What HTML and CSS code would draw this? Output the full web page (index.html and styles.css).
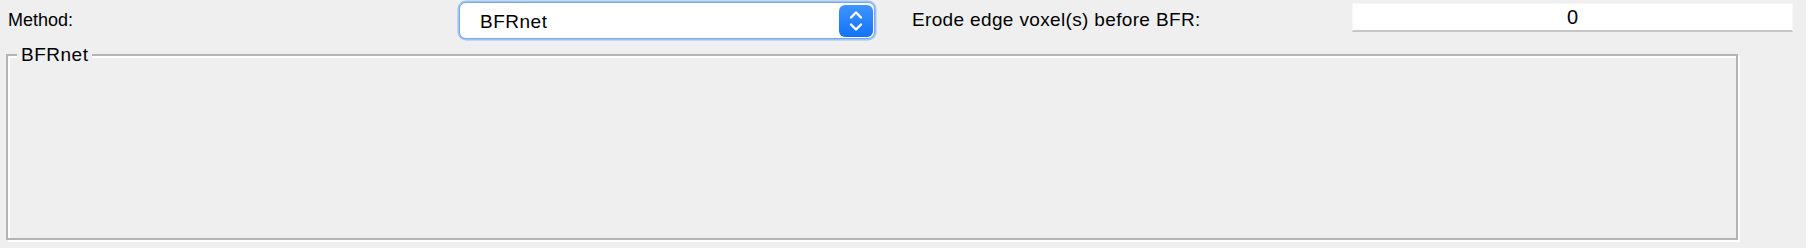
FILE: index.html
```html
<!DOCTYPE html>
<html>
<head>
<meta charset="utf-8">
<link rel="stylesheet" href="styles.css">
</head>
<body>
<div class="page">
  <div class="toprow">
    <div class="label label-method">Method:</div>
    <div class="combo">
      <span class="combo-text">BFRnet</span>
      <span class="combo-btn">
        <svg width="14" height="22" viewBox="0 0 14 22">
          <path d="M2 7.5 L7 2.5 L12 7.5" fill="none" stroke="#fff" stroke-width="2.4" stroke-linecap="round" stroke-linejoin="round"/>
          <path d="M2 14.5 L7 19.5 L12 14.5" fill="none" stroke="#fff" stroke-width="2.4" stroke-linecap="round" stroke-linejoin="round"/>
        </svg>
      </span>
    </div>
    <div class="label label-erode">Erode edge voxel(s) before BFR:</div>
    <div class="spin">0</div>
  </div>
  <div class="group">
    <div class="group-title">BFRnet</div>
  </div>
</div>
</body>
</html>
```

FILE: styles.css
```css
html, body {
  margin: 0;
  padding: 0;
  background: #efefef;
}
body {
  width: 1806px;
  height: 248px;
  overflow: hidden;
  font-family: "Liberation Sans", Arial, Helvetica, sans-serif;
  color: #000;
}
.page {
  display: flex;
  flex-direction: column;
}
.toprow {
  display: flex;
  align-items: flex-start;
  height: 54px;
  padding-left: 8px;
}
.label {
  font-size: 19px;
  line-height: 20px;
  padding-top: 10px;
}
.label-method {
  width: 451px;
  font-size: 18px;
}
.label-erode {
  width: 440px;
  margin-left: 37px;
  letter-spacing: 0.35px;
}
.combo {
  box-sizing: border-box;
  margin-top: 2px;
  width: 416px;
  height: 37px;
  background: #fff;
  border: 1px solid #74a9ef;
  border-radius: 7px;
  box-shadow: 0 0 0 1.5px rgba(126, 177, 243, 0.7);
  display: flex;
  align-items: center;
  justify-content: space-between;
  padding-left: 20px;
  padding-right: 1px;
}
.combo-text {
  font-size: 19px;
  letter-spacing: 0.5px;
  padding-top: 3px;
}
.combo-btn {
  width: 34px;
  height: 32px;
  border-radius: 6px;
  background: linear-gradient(#3f94ff, #1273f6);
  display: flex;
  align-items: center;
  justify-content: center;
}
.combo-btn svg {
  display: block;
}
.spin {
  box-sizing: border-box;
  margin-top: 3px;
  width: 441px;
  height: 29px;
  background: #fff;
  border: 1px solid #f7f7f7;
  border-bottom: 2px solid #c6c6c6;
  text-align: center;
  font-size: 20px;
  line-height: 26px;
}
.group {
  box-sizing: border-box;
  margin-left: 6px;
  width: 1732px;
  height: 186px;
  border: 2px solid #b4b4b4;
  box-shadow: inset 2px 2px 0 #fff, 2px 2px 0 #fff;
  position: relative;
}
.group-title {
  position: absolute;
  left: 9px;
  top: -11px;
  padding: 0 4px;
  background: #efefef;
  font-size: 19px;
  line-height: 20px;
  letter-spacing: 0.5px;
}
```
